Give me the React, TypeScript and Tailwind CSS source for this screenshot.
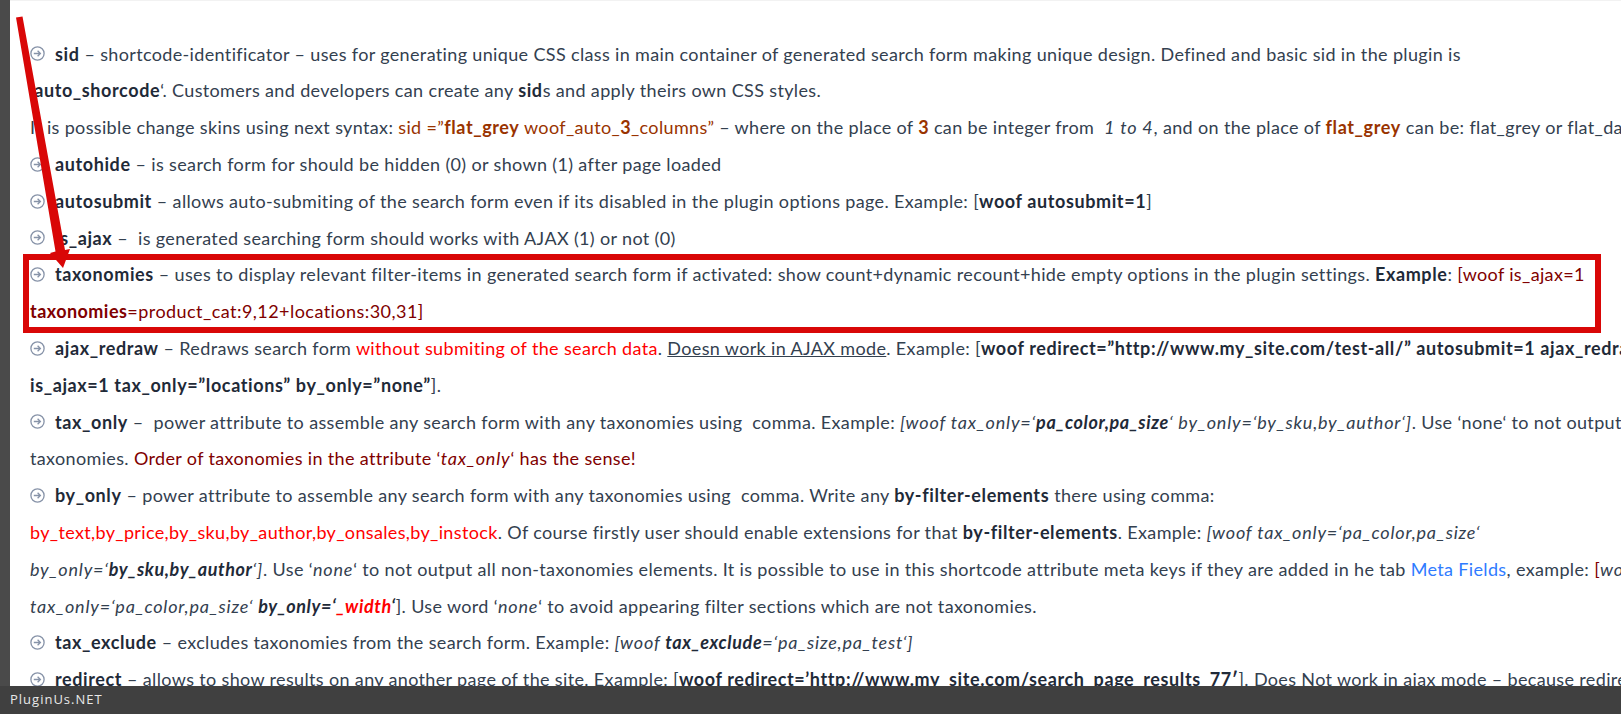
import React from 'react';

const Icon = () => (
    <svg viewBox="0 0 15 15" className="w-[15px] h-[15px] mr-[10px] shrink-0 inline-block" fill="none" stroke="#8793a8" strokeWidth="1.3">
        <circle cx="7.5" cy="7.5" r="6.6" />
        <path d="M3.8 7.5h6.6M7.6 4.7l2.8 2.8-2.8 2.8" />
    </svg>
);

const B = ({ children }: { children: React.ReactNode }) => <b className="font-bold tracking-[0.6px] text-[#1f2a38]">{children}</b>;
const Brown = ({ children }: { children: React.ReactNode }) => <span className="text-[#993300]">{children}</span>;
const Maroon = ({ children }: { children: React.ReactNode }) => <span className="text-[#800000]">{children}</span>;
const Red = ({ children }: { children: React.ReactNode }) => <span className="text-[#ff0000]">{children}</span>;
const I = ({ children }: { children: React.ReactNode }) => <i className="italic tracking-[0.8px]">{children}</i>;

const Line = ({ icon, children }: { icon?: boolean; children: React.ReactNode }) => (
    <div className="h-[36.8px] leading-[36.8px] whitespace-pre flex items-center">
        {icon && <Icon />}
        <span>{children}</span>
    </div>
);

export default function App() {
    return (
        <div className="relative h-[714px] w-full overflow-hidden flex flex-col bg-white font-['Lato','Noto_Sans',sans-serif] text-[18px] tracking-[0.35px] text-[#33404f]">
            <div className="flex flex-1 min-h-0">
                <div className="w-[10px] bg-[#4a4a4a]"></div>
                <div className="flex-1 min-w-0 overflow-hidden pl-5 pt-[34.6px] border-t border-[#f2f2f2]">
                    <Line icon><B>sid</B> – shortcode-identificator – uses for generating unique CSS class in main container of generated search form making unique design. Defined and basic sid in the plugin is</Line>
                    <Line><B>‘auto_shorcode</B>‘. Customers and developers can create any <B>sid</B>s and apply theirs own CSS styles.</Line>
                    <Line>It is possible change skins using next syntax: <Brown>sid =”<b className="tracking-[0.6px]">flat_grey</b> woof_auto_<b>3</b>_columns”</Brown> – where on the place of <Brown><b>3</b></Brown> can be integer from  <I>1 to 4</I>, and on the place of <Brown><b className="tracking-[0.6px]">flat_grey</b></Brown> can be: flat_grey or flat_dark</Line>
                    <Line icon><B>autohide</B> – is search form for should be hidden (0) or shown (1) after page loaded</Line>
                    <Line icon><B>autosubmit</B> – allows auto-submiting of the search form even if its disabled in the plugin options page. Example: [<B>woof autosubmit=1</B>]</Line>
                    <Line icon><B>is_ajax</B> –  is generated searching form should works with AJAX (1) or not (0)</Line>
                    <Line icon><B>taxonomies</B> – uses to display relevant filter-items in generated search form if activated: show count+dynamic recount+hide empty options in the plugin settings. <B>Example</B>: <Maroon>[woof is_ajax=1</Maroon></Line>
                    <Line><span className="tracking-[0.45px] text-[#800000]"><b>taxonomies</b>=product_cat:9,12+locations:30,31]</span></Line>
                    <Line icon><B>ajax_redraw</B> – Redraws search form <Red>without submiting of the search data</Red>. <span className="underline">Doesn work in AJAX mode</span>. Example: [<B>woof redirect=”http://www.my_site.com/test-all/” autosubmit=1 ajax_redraw=1</B></Line>
                    <Line><B>is_ajax=1 tax_only=”locations” by_only=”none”</B>].</Line>
                    <Line icon><B>tax_only</B> –  power attribute to assemble any search form with any taxonomies using  comma. Example: <I>[woof tax_only=‘<B>pa_color,pa_size</B>‘ by_only=‘by_sku,by_author‘]</I>. Use ‘none‘ to not output all non-</Line>
                    <Line>taxonomies. <Maroon>Order of taxonomies in the attribute ‘<I>tax_only</I>‘ has the sense!</Maroon></Line>
                    <Line icon><B>by_only</B> – power attribute to assemble any search form with any taxonomies using  comma. Write any <B>by-filter-elements</B> there using comma:</Line>
                    <Line><Red>by_text,by_price,by_sku,by_author,by_onsales,by_instock</Red>. Of course firstly user should enable extensions for that <B>by-filter-elements</B>. Example: <I>[woof tax_only=‘pa_color,pa_size‘</I></Line>
                    <Line><I>by_only=‘<B>by_sku,by_author</B>‘]</I>. Use ‘<I>none</I>‘ to not output all non-taxonomies elements. It is possible to use in this shortcode attribute meta keys if they are added in he tab <span className="text-[#2f7bff]">Meta Fields</span>, example: <Maroon>[</Maroon><I>woof</I></Line>
                    <Line><I>tax_only=‘pa_color,pa_size‘ <B>by_only=‘<span className="text-[#ff0000]">_width</span>‘</B></I>]. Use word ‘<I>none</I>‘ to avoid appearing filter sections which are not taxonomies.</Line>
                    <Line icon><B>tax_exclude</B> – excludes taxonomies from the search form. Example: <I>[woof <B>tax_exclude</B>=‘pa_size,pa_test‘]</I></Line>
                    <Line icon><B>redirect</B> – allows to show results on any another page of the site. Example: [<B>woof redirect=’http://www.my_site.com/search_page_results_77′</B>]. Does Not work in ajax mode – because redirect</Line>
                </div>
            </div>
            <div className="h-[28px] shrink-0 bg-[#404040] flex items-center pl-[10px] font-['Open_Sans',sans-serif] text-[13px] tracking-[1px] text-[#e8e8e8]">
                PluginUs.NET
            </div>

            {/* highlight frame */}
            <div className="absolute left-[23px] top-[254px] w-[1578px] h-[79px] border-[6px] border-[#d90707]"></div>

            {/* arrow pointing at the frame */}
            <svg className="absolute left-0 top-0 w-[100px] h-[280px]" viewBox="0 0 100 280" fill="#d90707">
                <path d="M16 17.5 22.5 16.500 65 250 70 249 63 268 50 253 55.500 251.500Z" />
            </svg>
        </div>
    );
}
